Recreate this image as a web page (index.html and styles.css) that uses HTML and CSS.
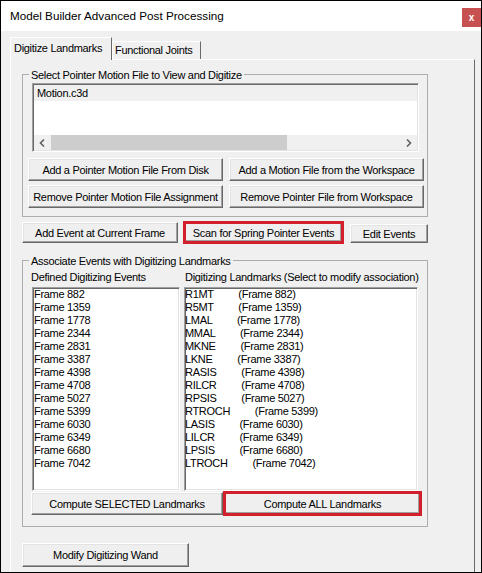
FILE: index.html
```html
<!DOCTYPE html>
<html>
<head>
<meta charset="utf-8">
<link rel="stylesheet" href="styles.css">
</head>
<body>
<div class="window">
  <div class="titlebar">
    <span class="title">Model Builder Advanced Post Processing</span>
    <button class="close">x</button>
  </div>
  <div class="client">
    <div class="tabs">
      <div class="tab active">Digitize Landmarks</div>
      <div class="tab inactive">Functional Joints</div>
    </div>
    <div class="panel">
      <fieldset class="group g1">
        <legend>Select Pointer Motion File to View and Digitize</legend>
        <div class="listbox files">
          <div class="file-row">Motion.c3d</div>
          <div class="file-space"></div>
          <div class="hscroll">
            <div class="sb-arrow"><svg width="7" height="8" viewBox="0 0 7 8"><polyline points="5,0.5 1.5,4 5,7.5" fill="none" stroke="#606060" stroke-width="1.6"/></svg></div>
            <div class="sb-track"><div class="sb-thumb"></div></div>
            <div class="sb-arrow"><svg width="7" height="8" viewBox="0 0 7 8"><polyline points="2,0.5 5.5,4 2,7.5" fill="none" stroke="#606060" stroke-width="1.6"/></svg></div>
          </div>
        </div>
        <div class="btn-grid">
          <button class="btn">Add a Pointer Motion File From Disk</button>
          <button class="btn">Add a Motion File from the Workspace</button>
          <button class="btn">Remove Pointer Motion File Assignment</button>
          <button class="btn">Remove Pointer File from Workspace</button>
        </div>
      </fieldset>
      <div class="event-row">
        <button class="btn b-add">Add Event at Current Frame</button>
        <button class="btn hl b-scan">Scan for Spring Pointer Events</button>
        <button class="btn b-edit">Edit Events</button>
      </div>
      <fieldset class="group g2">
        <legend>Associate Events with Digitizing Landmarks</legend>
        <div class="cols">
          <div class="col c1">
            <div class="col-label">Defined Digitizing Events</div>
            <div class="listbox events">
              <div class="item">Frame 882</div>
              <div class="item">Frame 1359</div>
              <div class="item">Frame 1778</div>
              <div class="item">Frame 2344</div>
              <div class="item">Frame 2831</div>
              <div class="item">Frame 3387</div>
              <div class="item">Frame 4398</div>
              <div class="item">Frame 4708</div>
              <div class="item">Frame 5027</div>
              <div class="item">Frame 5399</div>
              <div class="item">Frame 6030</div>
              <div class="item">Frame 6349</div>
              <div class="item">Frame 6680</div>
              <div class="item">Frame 7042</div>
            </div>
          </div>
          <div class="col c2">
            <div class="col-label">Digitizing Landmarks (Select to modify association)</div>
            <div class="listbox marks">
              <div class="item">R1MT         (Frame 882)</div>
              <div class="item">R5MT         (Frame 1359)</div>
              <div class="item">LMAL         (Frame 1778)</div>
              <div class="item">MMAL         (Frame 2344)</div>
              <div class="item">MKNE         (Frame 2831)</div>
              <div class="item">LKNE         (Frame 3387)</div>
              <div class="item">RASIS         (Frame 4398)</div>
              <div class="item">RILCR         (Frame 4708)</div>
              <div class="item">RPSIS         (Frame 5027)</div>
              <div class="item">RTROCH         (Frame 5399)</div>
              <div class="item">LASIS         (Frame 6030)</div>
              <div class="item">LILCR         (Frame 6349)</div>
              <div class="item">LPSIS         (Frame 6680)</div>
              <div class="item">LTROCH         (Frame 7042)</div>
            </div>
          </div>
        </div>
        <div class="compute-row">
          <button class="btn b-sel">Compute SELECTED Landmarks</button>
          <button class="btn hl b-all">Compute ALL Landmarks</button>
        </div>
      </fieldset>
      <button class="btn b-wand">Modify Digitizing Wand</button>
    </div>
  </div>
</div>
</body>
</html>
```
FILE: styles.css
```css
body {
  margin: 0;
  background: #f0f0f0;
}

.window {
  width: 482px;
  height: 573px;
  box-sizing: border-box;
  border: 1px solid #000;
  background: #f0f0f0;
  display: flex;
  flex-direction: column;
  overflow: hidden;
  font-family: "Liberation Sans", Arial, sans-serif;
  font-size: 11px;
  letter-spacing: -0.3px;
  color: #000;
}

.titlebar {
  height: 30px;
  flex: none;
  background: #fff;
  display: flex;
  align-items: flex-start;
}

.title {
  padding-left: 9px;
  line-height: 30px;
  font-size: 11.7px;
  letter-spacing: 0;
  white-space: nowrap;
}

.close {
  margin-left: auto;
  margin-top: 7px;
  width: 19px;
  height: 19px;
  padding: 0;
  border: 0;
  background: #c75050;
  color: #fff;
  font-family: "Liberation Sans", Arial, sans-serif;
  font-weight: bold;
  font-size: 10px;
  line-height: 18px;
  text-align: center;
}

.client {
  flex: 1;
  min-height: 0;
  display: flex;
  flex-direction: column;
  padding: 6px 0 0 9px;
}

.tabs {
  display: flex;
  align-items: flex-end;
  height: 22px;
  flex: none;
}

.tab {
  box-sizing: border-box;
  height: 18px;
  border-top: 1px solid #fff;
  border-left: 1px solid #fff;
  border-right: 1px solid #696969;
  line-height: 13px;
  white-space: nowrap;
}

.tab.active {
  width: 102px;
  height: 23px;
  margin-bottom: -1px;
  padding: 4px 0 0 3px;
  position: relative;
  z-index: 1;
  background: #f0f0f0;
}

.tab.inactive {
  width: 89px;
  padding: 2px 0 0 2px;
}

.panel {
  flex: 1;
  box-sizing: border-box;
  width: 465px;
  border-top: 1px solid #fff;
  border-left: 1px solid #fff;
  border-right: 1px solid #696969;
  padding: 0 0 0 11px;
}

.group {
  margin: 0;
  min-width: 0;
  box-sizing: border-box;
  width: 406px;
  border: 1px solid #adadad;
  padding: 0 3px 8px 5px;
}

.group legend {
  padding: 3px 2px 0;
  margin-left: 1px;
  line-height: 11px;
  white-space: nowrap;
}

.g1 {
  margin-top: 7px;
}

.listbox {
  box-sizing: border-box;
  background: #fff;
  border: 1px solid;
  border-color: #a0a0a0 #fff #fff #a0a0a0;
  box-shadow: inset 1px 1px #696969, inset -1px -1px #e3e3e3;
  overflow: hidden;
}

.files {
  margin: 2px 0 0 4px;
  width: 387px;
  height: 69px;
  padding: 1px;
  display: flex;
  flex-direction: column;
}

.file-row {
  height: 16px;
  flex: none;
  box-sizing: border-box;
  padding: 1px 0 0 3px;
  line-height: 14px;
  background: #f0f0f0;
}

.file-space {
  flex: 1;
}

.hscroll {
  height: 15px;
  flex: none;
  display: flex;
  background: #f0f0f0;
}

.sb-arrow {
  width: 17px;
  display: flex;
  align-items: center;
  justify-content: center;
}

.sb-track {
  flex: 1;
  display: flex;
}

.sb-thumb {
  width: 236px;
  background: #cdcdcd;
}

.btn {
  box-sizing: border-box;
  margin: 0;
  padding: 0;
  font-family: "Liberation Sans", Arial, sans-serif;
  font-size: 11px;
  letter-spacing: -0.3px;
  color: #000;
  white-space: nowrap;
  background: #efefef;
  border: 1px solid;
  border-color: #fff #696969 #696969 #fff;
  box-shadow: inset -1px -1px #a0a0a0, inset 1px 1px #e3e3e3;
}

.btn.hl {
  border: 3px solid #d21f2b;
  box-shadow: inset -1px -1px #a0a0a0;
}

.btn-grid {
  margin-top: 6px;
  display: grid;
  grid-template-columns: 195px 195px;
  grid-auto-rows: 23px;
  column-gap: 6px;
  row-gap: 4px;
}

.event-row {
  margin-top: 4px;
  height: 23px;
  display: flex;
  align-items: center;
}

.b-add {
  width: 156px;
  height: 21px;
}

.b-scan {
  margin-left: 5px;
  width: 161px;
  height: 23px;
}

.b-edit {
  margin-left: 6px;
  margin-top: 2px;
  width: 78px;
  height: 19px;
}

.g2 {
  margin-top: 9px;
  padding-bottom: 10px;
}

.cols {
  display: flex;
  margin-left: 3px;
}

.c1 {
  width: 149px;
}

.c2 {
  width: 234px;
  margin-left: 4px;
}

.col-label {
  line-height: 13px;
  margin: 4px 0 3px;
  white-space: nowrap;
}

.c2 .col-label {
  padding-left: 1px;
}

.events {
  margin-left: 1px;
  width: 148px;
  height: 204px;
  padding-left: 1px;
}

.marks {
  width: 234px;
  height: 204px;
}

.item {
  line-height: 13px;
  white-space: pre;
}

.compute-row {
  margin-left: 3px;
  height: 25px;
  display: flex;
  align-items: center;
}

.b-sel {
  width: 192px;
  height: 23px;
}

.b-all {
  width: 199px;
  height: 25px;
}

.b-wand {
  display: block;
  margin-top: 16px;
  width: 167px;
  height: 24px;
}
```
